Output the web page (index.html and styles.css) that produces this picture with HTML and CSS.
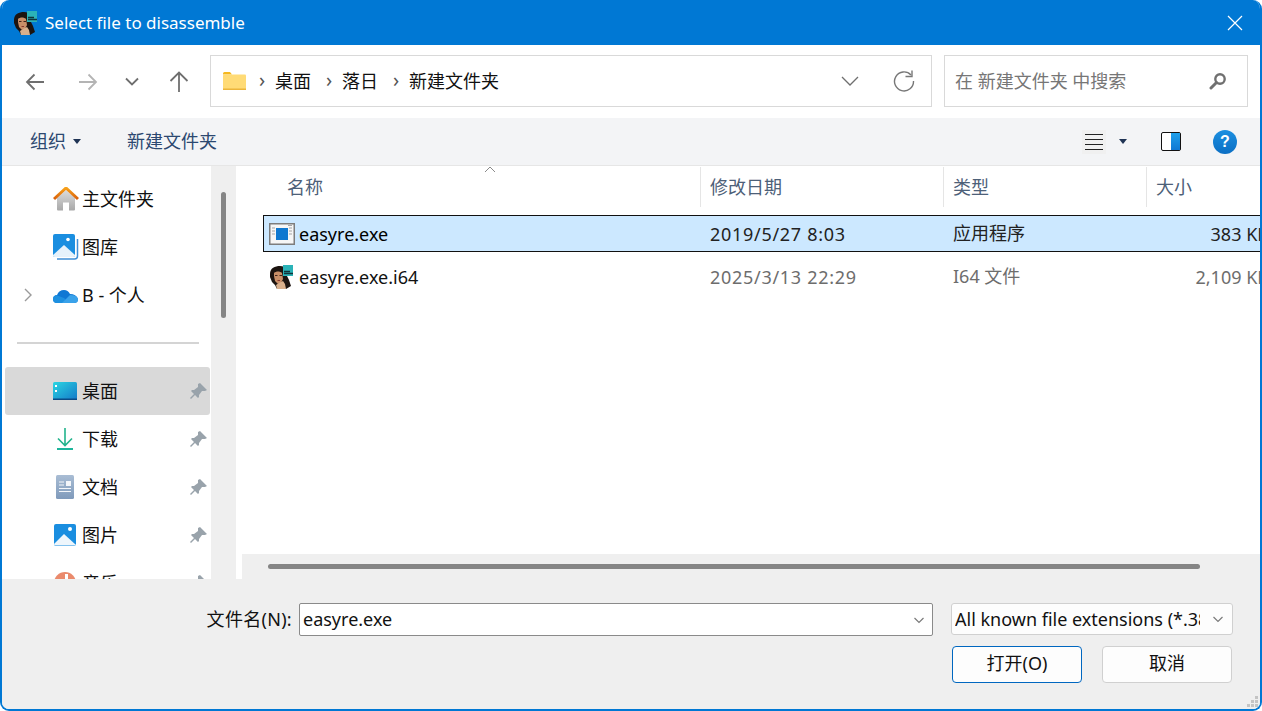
FILE: index.html
```html
<!DOCTYPE html>
<html lang="zh-CN">
<head>
  <meta charset="UTF-8">
  <title>Select file to disassemble</title>
  <link rel="stylesheet" href="styles.css">
</head>
<body>
  <svg class="defs" width="0" height="0">
    <symbol id="portrait" viewBox="0 0 24 24">
      <path d="M1 9C1 3 6 1 11 1c3 0 6 1 7 4v6l2 4 2 6-5 3H8l-2-4-3-3-2-5z" fill="#1c1410"/>
      <path d="M5 8c2-2 6-2 8 0l1 6-2 4-3 1-3-3-1-5z" fill="#c98f68"/>
      <path d="M7 20l3-2 4-2 2 3 1 5H8z" fill="#d9b08c"/>
      <path d="M6 10.500h2.500M10.500 10.500H13" stroke="#40241a" stroke-width="1"/>
      <path d="M8.500 15.500h2.500" stroke="#8b3a2e" stroke-width="1"/>
      <rect x="14" y="0" width="10" height="11" fill="#2bb3b8"/>
      <path d="M15 8.500h9M15 6.500h6" stroke="#10343a" stroke-width="1.400"/>
    </symbol>
    <symbol id="pin" viewBox="0 0 18 18">
      <path d="M10 1l7 7-2 1-3 0-3 4 0 2-1 1-3-3-4 4-1-1 4-4-3-3 1-1 2 0 4-3 0-3z" fill="#99a3ab"/>
    </symbol>
    <symbol id="chev" viewBox="0 0 12 12">
      <path d="M1.500 4l4.500 4.500L10.500 4" fill="none" stroke="#7a7a7a" stroke-width="1.200"/>
    </symbol>
  </svg>

  <div class="window">
    <div class="titlebar">
      <svg class="title-icon" width="24" height="24"><use href="#portrait"/></svg>
      <span class="title-text">Select file to disassemble</span>
      <svg class="close" width="16" height="16" viewBox="0 0 16 16"><path d="M1 1l14 14M15 1L1 15" stroke="#fff" stroke-width="1.200"/></svg>
    </div>

    <div class="navbar">
      <div class="nav-btns">
        <svg class="nav-back" width="20" height="18" viewBox="0 0 20 18"><path d="M19 9H2M9.500 1.500L2 9l7.500 7.500" fill="none" stroke="#6f6f6f" stroke-width="1.800"/></svg>
        <svg class="nav-fwd" width="20" height="18" viewBox="0 0 20 18"><path d="M1 9h17M10.500 1.500L18 9l-7.500 7.500" fill="none" stroke="#b4b4b4" stroke-width="1.800"/></svg>
        <svg class="nav-down" width="14" height="9" viewBox="0 0 14 9"><path d="M1 1.500l6 6 6-6" fill="none" stroke="#6f6f6f" stroke-width="1.800"/></svg>
        <svg class="nav-up" width="20" height="21" viewBox="0 0 20 21"><path d="M10 21V2M1.500 10L10 1.500 18.500 10" fill="none" stroke="#6f6f6f" stroke-width="1.800"/></svg>
      </div>
      <div class="address">
        <svg class="folder" width="23" height="18" viewBox="0 0 23 18">
          <path d="M0 1.500Q0 0 1.500 0H7l2 2.500H0z" fill="#f5b81f"/>
          <rect x="0" y="2.500" width="23" height="15.500" rx="1" fill="#ffdb76"/>
          <rect x="0" y="16.500" width="23" height="1.500" fill="#ecb53b"/>
        </svg>
        <span class="sep">›</span><span class="crumb">桌面</span>
        <span class="sep">›</span><span class="crumb">落日</span>
        <span class="sep">›</span><span class="crumb">新建文件夹</span>
        <span class="grow"></span>
        <svg class="addr-chev" width="18" height="10" viewBox="0 0 18 10"><path d="M1 1l8 8 8-8" fill="none" stroke="#6f6f6f" stroke-width="1.300"/></svg>
        <svg class="refresh" width="22" height="22" viewBox="0 0 22 22"><path d="M18 5A9.500 9.500 0 1 0 20.500 11" fill="none" stroke="#777" stroke-width="1.400"/><path d="M12.500 6.500h6.500V0.500" fill="none" stroke="#777" stroke-width="1.400"/></svg>
      </div>
      <div class="search">
        <span class="search-text">在 新建文件夹 中搜索</span>
        <svg width="18" height="18" viewBox="0 0 18 18"><circle cx="11" cy="7" r="4.700" fill="none" stroke="#707070" stroke-width="2.400"/><path d="M7.500 10.500L2 16" stroke="#707070" stroke-width="3" stroke-linecap="round"/></svg>
      </div>
    </div>

    <div class="toolbar">
      <span class="tool-label">组织</span><span class="caret"></span>
      <span class="tool-label new-folder">新建文件夹</span>
      <span class="grow"></span>
      <span class="view-btn"><i></i><i></i><i></i><i></i></span><span class="caret view-caret"></span>
      <span class="pane-btn"><b></b></span>
      <span class="help">?</span>
    </div>

    <div class="main">
      <div class="sidebar">
        <div class="nav-item">
          <svg class="item-icon" width="26" height="24" viewBox="0 0 26 24">
            <defs><linearGradient id="roof" x1="0" y1="0" x2="0" y2="1"><stop offset="0" stop-color="#f7a21b"/><stop offset="1" stop-color="#d85f0a"/></linearGradient><linearGradient id="wall" x1="0" y1="0" x2="0" y2="1"><stop offset="0" stop-color="#dcdcdc"/><stop offset="1" stop-color="#a8a8a8"/></linearGradient></defs>
            <path d="M4 11l9-8 9 8v11.500q0 1-1 1h-5v-8h-6v8H5q-1 0-1-1z" fill="url(#wall)"/>
            <path d="M1 12L13 1l12 11" fill="none" stroke="url(#roof)" stroke-width="3"/>
          </svg>
          <span>主文件夹</span>
        </div>
        <div class="nav-item">
          <svg class="item-icon" width="26" height="26" viewBox="0 0 26 26">
            <path d="M24.500 5v17q0 3-3 3H4" fill="none" stroke="#3f8fd6" stroke-width="1.500"/>
            <rect x="0" y="0" width="22" height="23" rx="2" fill="#1a8ee0"/>
            <path d="M0 21l11-10 11 10v0.500q0 1.500-2 1.500H2q-2 0-2-1.500z" fill="#e6f2fb"/>
            <circle cx="15" cy="5.500" r="1.800" fill="#fff"/>
          </svg>
          <span>图库</span>
        </div>
        <div class="nav-item">
          <svg class="expand" width="8" height="14" viewBox="0 0 8 14"><path d="M1 1l6 6-6 6" fill="none" stroke="#9a9a9a" stroke-width="1.400"/></svg>
          <svg class="item-icon" width="25" height="16" viewBox="0 0 25 16">
            <path d="M4 16q-4 0-4-4 0-3.500 4-4 2-5 7-5 4 0 6 4 6 0 8 5 0 4-4 4z" fill="#0f78d4"/>
            <path d="M4 16q-4 0-4-4 0-3 3-4l8 3 5 5z" fill="#1e90e0"/>
            <path d="M9 16l8-8q8 0 8 5 0 3-4 3z" fill="#3aa2ea"/>
          </svg>
          <span>B - 个人</span>
        </div>
        <div class="divider"></div>
        <div class="nav-item selected">
          <svg class="item-icon" width="24" height="18" viewBox="0 0 24 18">
            <defs><linearGradient id="desk" x1="0" y1="0" x2="1" y2="1"><stop offset="0" stop-color="#2ad6e2"/><stop offset="1" stop-color="#1478c8"/></linearGradient></defs>
            <rect width="24" height="18" rx="1.500" fill="url(#desk)"/>
            <rect y="16.500" width="24" height="1.500" fill="#0b4a86"/>
            <rect x="2" y="3" width="2" height="2" fill="#fff"/><rect x="2" y="8" width="2" height="2" fill="#fff"/>
          </svg>
          <span>桌面</span>
          <svg class="pin" width="18" height="18"><use href="#pin"/></svg>
        </div>
        <div class="nav-item">
          <svg class="item-icon" width="24" height="24" viewBox="0 0 24 24"><path d="M12 1v17M5 11.500l7 7 7-7" fill="none" stroke="#22b38c" stroke-width="1.600"/><rect x="4" y="21" width="16" height="2" fill="#1db59b"/></svg>
          <span>下载</span>
          <svg class="pin" width="18" height="18"><use href="#pin"/></svg>
        </div>
        <div class="nav-item">
          <svg class="item-icon" width="24" height="24" viewBox="0 0 24 24">
            <defs><linearGradient id="doc" x1="0" y1="0" x2="0" y2="1"><stop offset="0" stop-color="#a9bdd4"/><stop offset="1" stop-color="#7f9abb"/></linearGradient></defs>
            <rect x="3" y="0" width="18" height="24" rx="1.500" fill="url(#doc)"/>
            <path d="M6 7h5M6 10h5M6 13.500h12M6 16.500h12" stroke="#f3f6fa" stroke-width="1"/>
            <rect x="13" y="6" width="5" height="5" fill="#f3f6fa"/>
          </svg>
          <span>文档</span>
          <svg class="pin" width="18" height="18"><use href="#pin"/></svg>
        </div>
        <div class="nav-item">
          <svg class="item-icon" width="24" height="24" viewBox="0 0 24 24">
            <rect x="1" y="1" width="22" height="22" rx="2" fill="#1a8ee0"/>
            <path d="M1 21l10-10 12 11v0.500H3q-2 0-2-1.500z" fill="#eef6fc"/>
            <circle cx="17" cy="6" r="2" fill="#fff"/>
          </svg>
          <span>图片</span>
          <svg class="pin" width="18" height="18"><use href="#pin"/></svg>
        </div>
        <div class="nav-item">
          <svg class="item-icon" width="24" height="24" viewBox="0 0 24 24"><circle cx="12" cy="12" r="11" fill="#ea8a6c"/><rect x="12" y="3" width="3" height="12" fill="#fff"/></svg>
          <span>音乐</span>
          <svg class="pin" width="18" height="18"><use href="#pin"/></svg>
        </div>
      </div>
      <div class="side-scroll"><div class="side-thumb"></div></div>

      <div class="files">
        <svg class="sort-arrow" width="12" height="7" viewBox="0 0 12 7"><path d="M1 6l5-5 5 5" fill="none" stroke="#8a8a8a" stroke-width="1"/></svg>
        <div class="file-head">
          <div class="col col-name">名称</div>
          <div class="col col-date">修改日期</div>
          <div class="col col-type">类型</div>
          <div class="col col-size">大小</div>
        </div>
        <div class="file-list">
          <div class="file-row active">
            <div class="col-name name-cell">
              <svg width="26" height="22" viewBox="0 0 26 22">
                <rect x="0.750" y="0.750" width="24.500" height="20.500" fill="#f6f6f6" stroke="#7d7d7d" stroke-width="1.500"/>
                <rect x="7" y="5" width="12" height="12" fill="#0f78d0"/>
                <path d="M3 5h3M3 8h3M3 11h3M20 5h3M20 8h3M20 11h3M19 2.500h4" stroke="#a5a5a5" stroke-width="1"/>
              </svg>
              <span>easyre.exe</span>
            </div>
            <div class="col-date date-cell">2019/5/27 8:03</div>
            <div class="col-type type-cell">应用程序</div>
            <div class="col-size">383 KB</div>
          </div>
          <div class="file-row muted">
            <div class="col-name name-cell">
              <svg class="file-portrait" width="24" height="24"><use href="#portrait"/></svg>
              <span>easyre.exe.i64</span>
            </div>
            <div class="col-date date-cell">2025/3/13 22:29</div>
            <div class="col-type type-cell">I64 文件</div>
            <div class="col-size">2,109 KB</div>
          </div>
        </div>
        <div class="h-scroll"><div class="h-thumb"></div></div>
      </div>
    </div>

    <div class="footer">
      <div class="footer-row">
        <label class="file-label">文件名(N):</label>
        <div class="name-input"><span>easyre.exe</span><svg width="12" height="12"><use href="#chev"/></svg></div>
        <div class="filter"><span>All known file extensions (*.384;*.386)</span><svg width="12" height="12"><use href="#chev"/></svg></div>
      </div>
      <div class="footer-btns">
        <button class="btn primary">打开(O)</button>
        <button class="btn">取消</button>
      </div>
      <svg class="grip" width="14" height="14" viewBox="0 0 14 14"><path d="M9 1h3v3H9zM5 5h3v3H5zM9 5h3v3H9zM1 9h3v3H1zM5 9h3v3H5zM9 9h3v3H9z" fill="#c4c4c4"/></svg>
    </div>
  </div>
</body>
</html>
```

FILE: styles.css
```css
* {
  box-sizing: border-box;
}
html, body {
  margin: 0;
  padding: 0;
  background: #fff;
}
body {
  width: 1262px;
  height: 711px;
  overflow: hidden;
  font-family: "Noto Sans", "Noto Sans CJK SC", sans-serif;
  font-size: 18px;
  color: #111;
}
.defs {
  position: absolute;
}
.grow {
  flex: 1;
}
.window {
  width: 1262px;
  height: 711px;
  border: 2px solid #0078d4;
  border-top: 0;
  border-radius: 9px;
  overflow: hidden;
  display: flex;
  flex-direction: column;
  background: #fff;
}

/* title */
.titlebar {
  height: 45px;
  flex: none;
  margin: 0 -2px;
  background: #0078d4;
  color: #fff;
  display: flex;
  align-items: center;
  padding-left: 13px;
}
.title-icon {
  margin-right: 8px;
}
.title-text {
  font-size: 17px;
  flex: 1;
  padding-bottom: 1px;
}
.close {
  margin-right: 19px;
}

/* address row */
.navbar {
  height: 73px;
  flex: none;
  display: flex;
  align-items: center;
  padding-bottom: 2px;
}
.nav-btns {
  width: 208px;
  height: 52px;
  display: flex;
  align-items: center;
  padding-top: 2px;
}
.nav-back {
  margin-left: 23px;
}
.nav-fwd {
  margin-left: 33px;
}
.nav-down {
  margin-left: 27px;
}
.nav-up {
  margin-left: 30px;
}
.address {
  width: 722px;
  height: 52px;
  border: 1px solid #d9d9d9;
  display: flex;
  align-items: center;
  padding-left: 12px;
}
.address span {
  padding-bottom: 2px;
}
.address svg {
  margin-top: 1px;
}
.folder {
  margin-right: 13px;
}
.sep {
  color: #555;
  font-size: 20px;
  width: 10px;
  margin-right: 6px;
  line-height: 1;
}
.crumb {
  margin-right: 15px;
}
.addr-chev {
  margin-right: 34px;
}
.refresh {
  margin-right: 16px;
}
.search {
  width: 304px;
  height: 52px;
  margin-left: 12px;
  border: 1px solid #d9d9d9;
  display: flex;
  align-items: center;
  justify-content: space-between;
  padding: 0 20px 0 10px;
  color: #767676;
}
.search-text {
  padding-bottom: 2px;
}

/* command bar */
.toolbar {
  height: 48px;
  flex: none;
  background: #f3f4f6;
  border-bottom: 1px solid #e6e6e6;
  display: flex;
  align-items: center;
  padding-left: 28px;
  color: #2c4870;
}
.tool-label {
  padding-bottom: 3px;
}
.caret {
  width: 0;
  height: 0;
  border: 4px solid transparent;
  border-top: 5px solid #1f3354;
  border-bottom: 0;
  margin-left: 7px;
}
.new-folder {
  margin-left: 46px;
}
.view-btn {
  width: 24px;
  height: 24px;
  background: #f0f0f0;
  display: flex;
  flex-direction: column;
  justify-content: center;
  align-items: center;
  gap: 4px;
  margin-right: 1px;
}
.view-btn i {
  width: 18px;
  height: 1px;
  background: #222;
}
.view-caret {
  margin-left: 12px;
}
.pane-btn {
  width: 20px;
  height: 19px;
  margin-left: 34px;
  border: 1.5px solid #111;
  border-radius: 2px;
  background: #fff;
  display: flex;
  justify-content: flex-end;
}
.pane-btn b {
  width: 9px;
  background: linear-gradient(#1fa0ea, #0f78d4);
}
.help {
  width: 24px;
  height: 24px;
  margin: 0 23px 0 32px;
  border-radius: 50%;
  background: linear-gradient(#1c8fe0, #0b6fc4);
  color: #fff;
  font: bold 16px/24px "Liberation Sans", sans-serif;
  text-align: center;
}

/* tree */
.main {
  height: 413px;
  flex: none;
  display: flex;
}
.sidebar {
  width: 209px;
  flex: none;
  overflow: hidden;
  padding: 9px 0 0 3px;
}
.nav-item {
  height: 48px;
  width: 205px;
  display: flex;
  align-items: center;
  position: relative;
  padding-left: 48px;
  border-radius: 3px;
}
.nav-item.selected {
  background: #d9d9d9;
}
.item-icon {
  position: absolute;
  left: 48px;
  top: 50%;
  transform: translateY(-50%);
}
.nav-item span {
  margin-left: 29px;
  padding-bottom: 2px;
}
.expand {
  position: absolute;
  left: 19px;
  top: 17px;
}
.pin {
  position: absolute;
  right: 2px;
  top: 15px;
}
.divider {
  height: 2px;
  width: 182px;
  margin: 23px 0 23px 12px;
  background: #d4d4d4;
}
.side-scroll {
  width: 25px;
  flex: none;
  background: #efefef;
  padding: 26px 0 0 10px;
}
.side-thumb {
  width: 5px;
  height: 126px;
  border-radius: 3px;
  background: #858585;
}

/* file list */
.files {
  flex: 1;
  margin-left: 6px;
  min-width: 0;
  position: relative;
  display: flex;
  flex-direction: column;
  overflow: hidden;
}
.sort-arrow {
  position: absolute;
  left: 242px;
  top: 0;
}
.file-head, .file-row {
  display: flex;
  flex: none;
}
.file-head {
  height: 41px;
  align-items: center;
  color: #4d6078;
}
.col {
  height: 40px;
  line-height: 40px;
  border-right: 1px solid #e5e5e5;
}
.col-name {
  width: 459px;
  flex: none;
}
.col.col-name {
  padding-left: 45px;
}
.col-date {
  width: 243px;
  flex: none;
  padding-left: 9px;
}
.date-cell {
  letter-spacing: 0.7px;
}
.col-type {
  width: 203px;
  flex: none;
  padding-left: 9px;
}
.type-cell {
  padding-bottom: 3px;
}
.col-size {
  width: 127px;
  flex: none;
  padding-left: 9px;
  border-right: 0;
}
.file-row .col-size {
  text-align: right;
  padding-right: 4px;
}
.file-list {
  flex: 1;
  padding-top: 8px;
}
.file-row {
  height: 37px;
  align-items: center;
  margin-left: 21px;
  margin-bottom: 6px;
  border: 1px solid transparent;
}
.file-row .col-name {
  width: 437px;
}
.file-row .col-size {
  width: 126px;
}
.file-row.active {
  background: #cce8ff;
  border-color: #111;
  width: 1010px;
  color: #222;
}
.file-row.active .name-cell span {
  color: #000;
}
.file-row.muted {
  color: #6d6d6d;
}
.file-row.muted .name-cell span {
  color: #111;
}
.name-cell {
  display: flex;
  align-items: center;
  padding-left: 5px;
  gap: 4px;
}
.file-portrait {
  margin-right: 2px;
}
.h-scroll {
  height: 25px;
  flex: none;
  background: #efefef;
  padding: 10px 0 0 26px;
}
.h-thumb {
  width: 932px;
  height: 5px;
  border-radius: 3px;
  background: #858585;
}

/* bottom area */
.footer {
  flex: 1;
  position: relative;
  background: #efefef;
  padding: 24px 27px 0 0;
}
.footer-row {
  display: flex;
  justify-content: flex-end;
  align-items: flex-start;
}
.file-label {
  line-height: 33px;
  margin-right: 7px;
  letter-spacing: 0.3px;
}
.name-input {
  width: 634px;
  height: 33px;
  background: #fff;
  border: 1px solid #8a8a8a;
  border-radius: 2px;
  display: flex;
  align-items: center;
  justify-content: space-between;
  padding: 0 7px 0 3px;
}
.name-input span {
  padding-bottom: 2px;
}
.filter {
  width: 282px;
  height: 32px;
  margin-left: 18px;
  background: #fdfdfd;
  border: 1px solid #d0d0d0;
  border-radius: 3px;
  display: flex;
  align-items: center;
  padding: 0 8px 0 3px;
}
.filter span {
  flex: 1;
  overflow: hidden;
  white-space: nowrap;
  margin-right: 12px;
}
.footer-btns {
  display: flex;
  justify-content: flex-end;
  gap: 20px;
  margin-top: 10px;
  padding-right: 1px;
}
.btn {
  width: 130px;
  height: 37px;
  background: #fdfdfd;
  border: 1px solid #d0d0d0;
  border-radius: 4px;
  font: inherit;
  color: #111;
  padding: 0 0 5px;
}
.btn.primary {
  border-color: #0067c0;
}
.grip {
  position: absolute;
  right: 0;
  bottom: 0;
}
```
